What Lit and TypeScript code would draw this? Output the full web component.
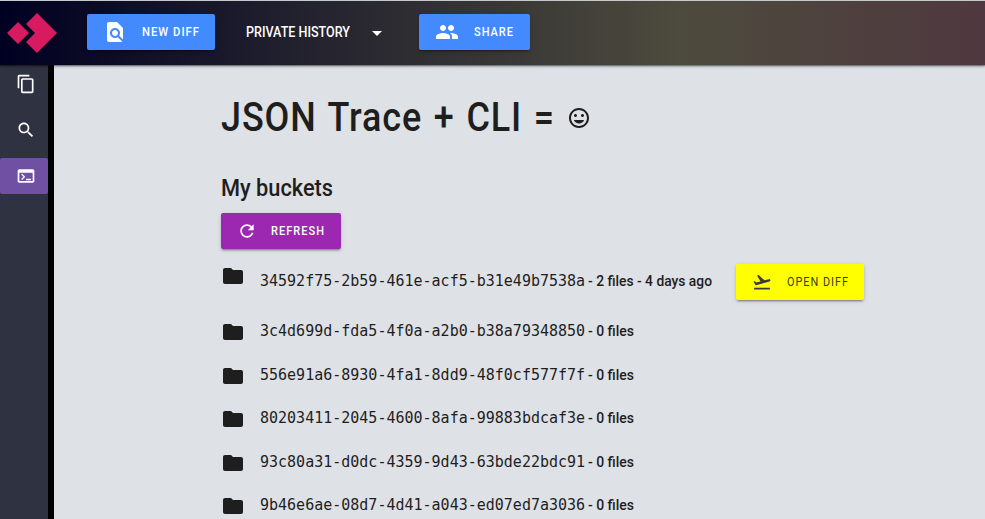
import { LitElement, html, css, svg } from "lit";
import { customElement, property } from "lit/decorators.js";

const ICONS: Record<string, string> = {
  find: "M20 19.59V8l-6-6H6c-1.1 0-1.99.9-1.99 2L4 20c0 1.1.89 2 1.99 2H18c.45 0 .85-.15 1.19-.4l-4.43-4.43c-.8.52-1.74.83-2.76.83-2.76 0-5-2.24-5-5s2.24-5 5-5 5 2.24 5 5c0 1.02-.31 1.96-.83 2.75L20 19.59zM9 13c0 1.66 1.34 3 3 3s3-1.34 3-3-1.34-3-3-3-3 1.34-3 3z",
  caret: "M7 10l5 5 5-5z",
  people: "M16 11c1.66 0 2.99-1.34 2.99-3S17.66 5 16 5c-1.66 0-3 1.34-3 3s1.34 3 3 3zm-8 0c1.66 0 2.99-1.34 2.99-3S9.66 5 8 5C6.34 5 5 6.34 5 8s1.34 3 3 3zm0 2c-2.33 0-7 1.17-7 3.5V19h14v-2.5c0-2.33-4.67-3.5-7-3.5zm8 0c-.29 0-.62.02-.97.05 1.16.84 1.97 1.97 1.97 3.45V19h6v-2.5c0-2.33-4.67-3.5-7-3.5z",
  copy: "M16 1H4c-1.1 0-2 .9-2 2v14h2V3h12V1zm3 4H8c-1.1 0-2 .9-2 2v14c0 1.1.9 2 2 2h11c1.1 0 2-.9 2-2V7c0-1.1-.9-2-2-2zm0 16H8V7h11v14z",
  search: "M15.5 14h-.79l-.28-.27C15.41 12.59 16 11.11 16 9.5 16 5.91 13.09 3 9.5 3S3 5.91 3 9.5 5.91 16 9.5 16c1.61 0 3.09-.59 4.23-1.57l.27.28v.79l5 4.99L20.49 19l-4.99-5zm-6 0C7.01 14 5 11.99 5 9.5S7.01 5 9.5 5 14 7.01 14 9.5 11.99 14 9.5 14z",
  terminal: "M20 4H4c-1.11 0-2 .9-2 2v12c0 1.1.89 2 2 2h16c1.1 0 2-.9 2-2V6c0-1.1-.89-2-2-2zm0 14H4V8h16v10zm-2-1h-6v-1.6h6V17zM7.3 16.8l-1.1-1.1L8.9 13l-2.7-2.7 1.1-1.1 3.8 3.8-3.8 3.8z",
  mood: "M11.99 2C6.47 2 2 6.48 2 12s4.47 10 9.99 10C17.52 22 22 17.52 22 12S17.52 2 11.99 2zM12 20c-4.42 0-8-3.58-8-8s3.58-8 8-8 8 3.58 8 8-3.58 8-8 8zm3.5-9c.83 0 1.5-.67 1.5-1.5S16.33 8 15.5 8 14 8.67 14 9.5s.67 1.5 1.5 1.5zm-7 0c.83 0 1.5-.67 1.5-1.5S9.33 8 8.5 8 7 8.67 7 9.5 7.67 11 8.5 11zm3.5 6.5c2.33 0 4.31-1.46 5.11-3.5H6.89c.8 2.04 2.78 3.5 5.11 3.5z",
  refresh: "M17.65 6.35C16.2 4.9 14.21 4 12 4c-4.42 0-7.99 3.58-7.99 8s3.57 8 7.99 8c3.73 0 6.84-2.55 7.73-6h-2.08c-.82 2.33-3.04 4-5.65 4-3.31 0-6-2.69-6-6s2.69-6 6-6c1.66 0 3.14.69 4.22 1.78L13 11h7V4l-2.35 2.35z",
  takeoff: "M2.5 19h19v2h-19zm19.57-9.36c-.21-.8-1.04-1.28-1.84-1.06L14.92 10l-6.9-6.43-1.93.51 4.14 7.17-4.97 1.33-1.97-1.54-1.45.39 1.82 3.16.77 1.33 1.6-.43 5.31-1.42 4.35-1.16L21 11.49c.81-.23 1.28-1.05 1.07-1.85z",
  folder: "M10 4H4c-1.1 0-1.99.9-1.99 2L2 18c0 1.1.9 2 2 2h16c1.1 0 2-.9 2-2V8c0-1.1-.9-2-2-2h-8l-2-2z",
};

@customElement("md-icon")
export class MdIcon extends LitElement {
  @property() name = "";
  static styles = css`
    :host { display: block; flex: none; width: 24px; height: 24px; }
    svg { display: block; width: 100%; height: 100%; fill: currentColor; }
  `;
  render() {
    return html`<svg viewBox="0 0 24 24"><path d=${ICONS[this.name]}></path></svg>`;
  }
}

/* A single line of text condensed or stretched to a set width. */
@customElement("fit-text")
export class FitText extends LitElement {
  @property() text = "";
  @property({ type: Number }) width = 0;
  static styles = css`
    :host { display: block; flex: none; height: 1em; line-height: 1; }
    svg { display: block; height: 1em; overflow: visible; }
    text { fill: currentColor; }
  `;
  render() {
    return html`<svg width=${this.width}>
      ${svg`<text x="0" y="0.85em" textLength=${this.width} lengthAdjust="spacingAndGlyphs">${this.text}</text>`}
    </svg>`;
  }
}

interface Bucket { id: string; info: string; width: number; open?: boolean; }

const BUCKETS: Bucket[] = [
  { id: "34592f75-2b59-461e-acf5-b31e49b7538a", info: "- 2 files - 4 days ago", width: 124, open: true },
  { id: "3c4d699d-fda5-4f0a-a2b0-b38a79348850", info: "- 0 files", width: 46 },
  { id: "556e91a6-8930-4fa1-8dd9-48f0cf577f7f", info: "- 0 files", width: 46 },
  { id: "80203411-2045-4600-8afa-99883bdcaf3e", info: "- 0 files", width: 46 },
  { id: "93c80a31-d0dc-4359-9d43-63bde22bdc91", info: "- 0 files", width: 46 },
  { id: "9b46e6ae-08d7-4d41-a043-ed07ed7a3036", info: "- 0 files", width: 46 },
];

@customElement("app-root")
export class AppRoot extends LitElement {
  static styles = css`
    :host {
      display: flex; flex-direction: column; box-sizing: border-box;
      width: 100%; height: 100vh; overflow: hidden;
      border-top: 1px solid #c4c9cb;
      background: #dee1e6; color: #1e1e1e;
      font-family: Roboto, "Liberation Sans", sans-serif; font-weight: 500;
    }
    header {
      position: relative; z-index: 1; flex: none; height: 64px;
      display: flex; align-items: center; box-sizing: border-box; padding: 0 0 2px 7px;
      color: #fff;
      background: linear-gradient(90deg, #000022 0%, #4d4b3d 69%, #4f383f 100%);
      box-shadow: 0 1px 3px rgba(0, 0, 0, .45), 0 1px 1px rgba(0, 0, 0, .25);
    }
    .logo { width: 50px; height: 40px; margin: 2px 30px 0 0; fill: #d81b60; }
    button {
      display: flex; align-items: center; flex: none; box-sizing: border-box;
      height: 36px; border: 0; border-radius: 2px; padding: 0 0 0 16px;
      font: 500 13px Roboto, "Liberation Sans", sans-serif; letter-spacing: 1.2px;
      color: #fff; background: #448aff;
      box-shadow: 0 3px 1px -2px rgba(0,0,0,.2), 0 2px 2px rgba(0,0,0,.14), 0 1px 5px rgba(0,0,0,.12);
    }
    button fit-text { margin-top: -1px; }
    .new { width: 128px; gap: 15px; margin-right: 31px; }
    .share { width: 111px; gap: 15px; }
    .history { display: flex; align-items: center; gap: 15px; width: 173px; font-size: 14px; }
    .history md-icon { margin-top: 2px; }
    .body { flex: 1; min-height: 0; display: flex; }
    nav {
      flex: none; width: 48px; display: flex; flex-direction: column; gap: 10px;
      padding-top: 1px; background: #2f3241; border-right: 6px solid #000; color: #fff;
    }
    .tab { height: 36px; display: flex; align-items: center; padding-left: 15.5px; border-radius: 2px; }
    .tab.on { background: #7050a3; }
    .sm { width: 20px; height: 20px; }
    main { flex: 1; padding: 32px 0 0 167px; }
    h1, h2 { margin: 0; font-weight: 500; }
    h1 {
      display: flex; align-items: center; gap: 12px; height: 42px;
      font-size: 40px; letter-spacing: 1px; word-spacing: 2px;
    }
    h1 fit-text { margin-top: -2px; }
    h2 { font-size: 23px; height: 23px; margin-top: 37px; }
    .refresh { width: 120px; padding-left: 15.5px; gap: 14.5px; margin-top: 14px; background: #9c27b0; }
    .open { width: 128px; gap: 14.5px; margin-left: 24px; background: #ffff00; color: #3b3b3b; font-weight: 400; }
    .row { display: flex; height: 43.5px; align-items: center; }
    .row.first { height: 36px; margin: 15px 0 9.3px; }
    .row md-icon { margin-right: 15.5px; margin-top: 2px; margin-left: -.5px; }
    .row.first md-icon.folder { margin-top: -12px; }
    .row md-icon.sm { margin: 0; }
    code { font: 15px/18px "DejaVu Sans Mono", monospace; margin-right: 3px; }
    .first code { margin-top: -2px; }
    .info { font-size: 14.5px; margin-top: 1px; }
    .first .info { margin-top: -1px; }
  `;

  render() {
    return html`
      <header>
        <svg class="logo" viewBox="0 0 50 40"><path d="M0 20 11 9l11 11-11 11zM30 0l20 20-20 20-11-11 9-9-9-9z"></path></svg>
        <button class="new"><md-icon name="find"></md-icon><fit-text text="NEW DIFF" .width=${58}></fit-text></button>
        <div class="history"><fit-text text="PRIVATE HISTORY" .width=${104}></fit-text><md-icon name="caret"></md-icon></div>
        <button class="share"><md-icon name="people"></md-icon><fit-text text="SHARE" .width=${40}></fit-text></button>
      </header>
      <div class="body">
        <nav>
          <div class="tab"><md-icon class="sm" name="copy"></md-icon></div>
          <div class="tab"><md-icon class="sm" name="search"></md-icon></div>
          <div class="tab on"><md-icon class="sm" name="terminal"></md-icon></div>
        </nav>
        <main>
          <h1><fit-text text="JSON Trace + CLI =" .width=${334}></fit-text><md-icon name="mood"></md-icon></h1>
          <h2><fit-text text="My buckets" .width=${112}></fit-text></h2>
          <button class="refresh"><md-icon class="sm" name="refresh"></md-icon><fit-text text="REFRESH" .width=${54}></fit-text></button>
          ${BUCKETS.map((b) => html`
            <div class="row ${b.open ? "first" : ""}">
              <md-icon class="folder" name="folder"></md-icon>
              <code>${b.id}</code>
              <fit-text class="info" .text=${b.info} .width=${b.width}></fit-text>
              ${b.open ? html`<button class="open"><md-icon class="sm" name="takeoff"></md-icon><fit-text text="OPEN DIFF" .width=${62}></fit-text></button>` : ""}
            </div>`)}
        </main>
      </div>
    `;
  }
}
